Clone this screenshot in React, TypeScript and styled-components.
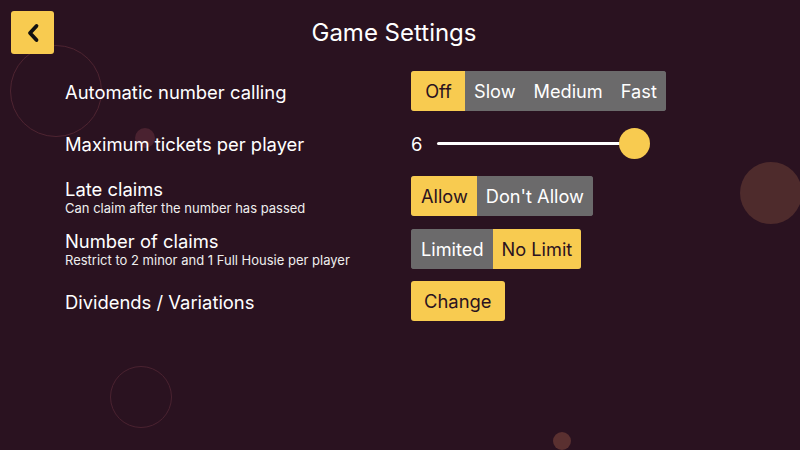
import { useState } from "react";
import styled, { createGlobalStyle } from "styled-components";

const GlobalStyle = createGlobalStyle`
  html, body {
    margin: 0;
    padding: 0;
    background: #2a1220;
  }
  body {
    font-family: Inter, "Liberation Sans", sans-serif;
  }
`;

const Screen = styled.div`
  position: relative;
  width: 800px;
  height: 450px;
  overflow: hidden;
  background: #2a1220;
  color: #fff;
`;

const Bubble = styled.div<{ $x: number; $y: number; $r: number; $ring?: boolean; $color: string }>`
  position: absolute;
  left: ${(p) => p.$x - p.$r}px;
  top: ${(p) => p.$y - p.$r}px;
  width: ${(p) => p.$r * 2}px;
  height: ${(p) => p.$r * 2}px;
  border-radius: 50%;
  box-sizing: border-box;
  background: ${(p) => (p.$ring ? "transparent" : p.$color)};
  border: ${(p) => (p.$ring ? `1.5px solid ${p.$color}` : "none")};
  pointer-events: none;
`;

const Header = styled.div`
  position: relative;
  display: flex;
  align-items: center;
  justify-content: center;
  height: 43px;
  padding: 11px 12px 0 0;
`;

const BackButton = styled.button`
  position: absolute;
  left: 11px;
  top: 11px;
  width: 43px;
  height: 43px;
  border: none;
  border-radius: 3px;
  background: #f8cb50;
  display: flex;
  align-items: center;
  justify-content: center;
  padding: 0;
  cursor: pointer;
`;

const Title = styled.h1`
  margin: 0;
  font-size: 24px;
  font-weight: 400;
`;

const Settings = styled.div`
  position: relative;
  display: grid;
  grid-template-columns: 346px auto;
  grid-auto-rows: 40px;
  row-gap: 12.5px;
  padding: 17px 0 0 65px;
`;

const Label = styled.div`
  display: flex;
  flex-direction: column;
  justify-content: center;
  padding-top: 1px;
`;

const LabelMain = styled.span`
  font-size: 18.4px;
  line-height: 22px;
`;

const LabelSub = styled.span`
  font-size: 13px;
  line-height: 16px;
  color: #eee;
`;

const Control = styled.div`
  display: flex;
  align-items: center;
`;

const Segments = styled.div`
  display: flex;
  height: 40px;
  border-radius: 3px;
  overflow: hidden;
  background: #6b6a6b;
`;

const Segment = styled.button<{ $active: boolean }>`
  border: none;
  margin: 0;
  min-width: 54px;
  padding: 0 9px;
  font-family: inherit;
  font-size: 18.2px;
  background: ${(p) => (p.$active ? "#f8cb50" : "#6b6a6b")};
  color: ${(p) => (p.$active ? "#2a1220" : "#fff")};
  cursor: pointer;
  &:first-child {
    padding-left: 10px;
  }
  &:last-child {
    padding-right: 9px;
  }
`;

const ActionButton = styled.button`
  height: 40px;
  padding: 0 13px;
  border: none;
  border-radius: 3px;
  background: #f8cb50;
  color: #2a1220;
  font-family: inherit;
  font-size: 18.4px;
  cursor: pointer;
`;

const SliderValue = styled.span`
  font-size: 18.4px;
  width: 26px;
`;

const Track = styled.div`
  position: relative;
  width: 212px;
  height: 3px;
  border-radius: 2px;
  background: #fff;
`;

const Thumb = styled.div`
  position: absolute;
  top: 50%;
  width: 31px;
  height: 31px;
  margin-left: -15.5px;
  margin-top: -15.5px;
  border-radius: 50%;
  background: #f8cb50;
`;

type SegProps = { options: string[]; initial: number };

function SegmentGroup({ options, initial }: SegProps) {
  const [sel, setSel] = useState(initial);
  return (
    <Segments>
      {options.map((o, i) => (
        <Segment key={o} $active={i === sel} onClick={() => setSel(i)}>
          {o}
        </Segment>
      ))}
    </Segments>
  );
}

export default function App() {
  const tickets = 6;
  const max = 6;
  return (
    <Screen>
      <GlobalStyle />
      <Bubble $x={56} $y={91} $r={46} $ring $color="#4e2431" />
      <Bubble $x={145} $y={138} $r={10} $color="#4a2230" />
      <Bubble $x={771} $y={193} $r={31} $color="#4e2b2c" />
      <Bubble $x={141} $y={397} $r={31} $ring $color="#4a2230" />
      <Bubble $x={562} $y={441} $r={9} $color="#5a3030" />

      <Header>
        <BackButton aria-label="Back">
          <svg width="14" height="20" viewBox="0 0 14 20">
            <path d="M10.5 3 L4 10 L10.5 17" fill="none" stroke="#111" strokeWidth="3.8" strokeLinecap="round" strokeLinejoin="round" />
          </svg>
        </BackButton>
        <Title>Game Settings</Title>
      </Header>

      <Settings>
        <Label>
          <LabelMain>Automatic number calling</LabelMain>
        </Label>
        <Control>
          <SegmentGroup options={["Off", "Slow", "Medium", "Fast"]} initial={0} />
        </Control>

        <Label>
          <LabelMain>Maximum tickets per player</LabelMain>
        </Label>
        <Control>
          <SliderValue>{tickets}</SliderValue>
          <Track>
            <Thumb style={{ left: `${((tickets - 1) / (max - 1)) * 93}%` }} />
          </Track>
        </Control>

        <Label>
          <LabelMain>Late claims</LabelMain>
          <LabelSub>Can claim after the number has passed</LabelSub>
        </Label>
        <Control>
          <SegmentGroup options={["Allow", "Don't Allow"]} initial={0} />
        </Control>

        <Label>
          <LabelMain>Number of claims</LabelMain>
          <LabelSub>Restrict to 2 minor and 1 Full Housie per player</LabelSub>
        </Label>
        <Control>
          <SegmentGroup options={["Limited", "No Limit"]} initial={1} />
        </Control>

        <Label>
          <LabelMain>Dividends / Variations</LabelMain>
        </Label>
        <Control>
          <ActionButton>Change</ActionButton>
        </Control>
      </Settings>
    </Screen>
  );
}
